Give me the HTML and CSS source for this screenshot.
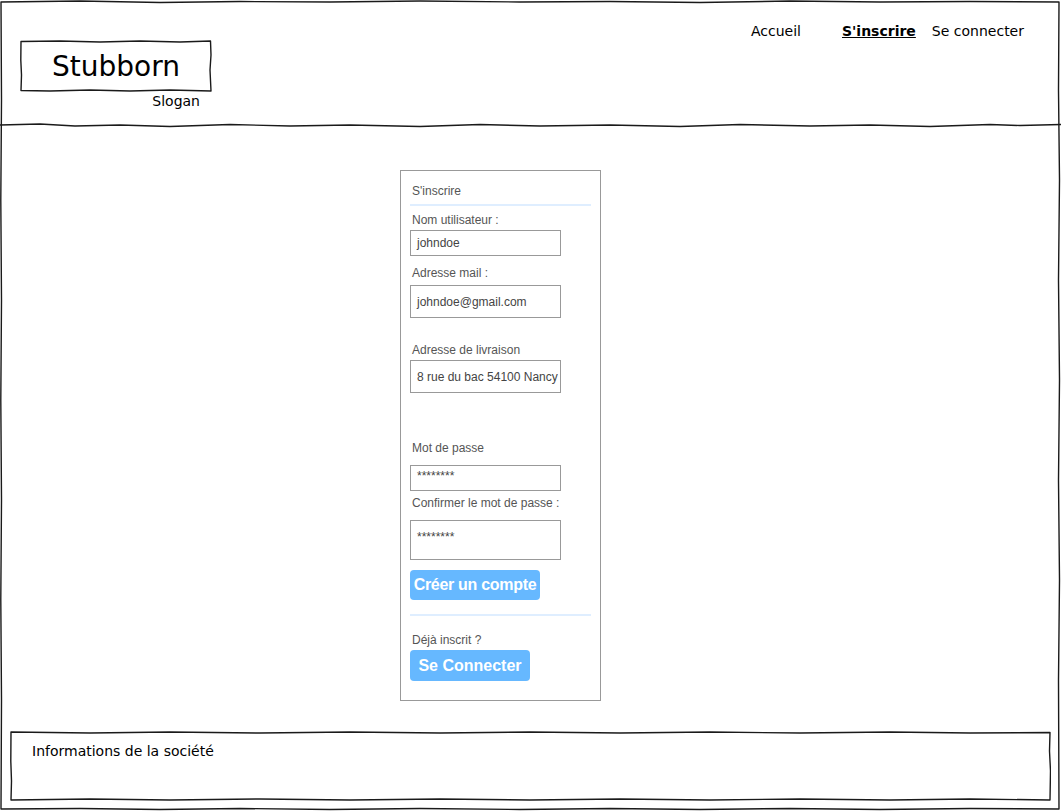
FILE: index.html
```html
<!DOCTYPE html>
<html lang="fr">
<head>
<meta charset="utf-8">
<title>Stubborn - S'inscrire</title>
<link rel="stylesheet" href="styles.css">
</head>
<body>
<div class="page">
  <svg class="sketch" width="1061" height="811" viewBox="0 0 1061 811" aria-hidden="true">
    <path d="M1 2 L80 1 L160 2.5 L240 1.5 L330 2 L420 1 L520 2 L610 1.5 L700 2.5 L790 1 L880 2 L970 1.5 L1059 2 L1058.5 90 L1059.5 180 L1058.5 280 L1059.5 380 L1058.5 480 L1059.5 580 L1058.5 680 L1059 809 L970 808.5 L880 809.5 L790 808.5 L700 809.5 L610 808.5 L520 809.5 L420 808.5 L330 809.5 L240 808.5 L160 809.5 L80 808.5 L1 809 L1.5 700 L0.8 600 L1.5 500 L0.8 400 L1.5 300 L0.8 200 L1.5 100 Z"/>
    <path d="M0 125 L40 124 L75 126 L120 125 L170 126.5 L230 124.5 L290 126 L350 125 L420 126.5 L480 124.5 L540 126 L610 125 L680 126.5 L740 124.5 L810 126 L870 125 L930 126.5 L990 124.5 L1020 125.5 L1061 124.5"/>
  </svg>

  <header class="header">
    <div class="brand">
      <div class="logo">
        <svg class="sketch" width="192" height="52" viewBox="0 0 192 52" aria-hidden="true">
          <path d="M1 1.5 L40 1 L80 2 L120 1 L160 2 L190.5 1 L191 15 L190 30 L191 51 L150 50 L110 51 L70 50 L30 51 L1 50.5 L1.5 35 L0.8 20 Z"/>
        </svg>
        <span class="logo-text">Stubborn</span>
      </div>
      <div class="slogan">Slogan</div>
    </div>
    <nav class="nav">
      <a class="nav-link nav-accueil" href="#">Accueil</a>
      <a class="nav-link nav-active" href="#">S'inscrire</a>
      <a class="nav-link" href="#">Se connecter</a>
    </nav>
  </header>

  <main class="main">
    <form class="card">
      <div class="card-title">S'inscrire</div>
      <div class="divider d1"></div>
      <label class="lbl l1">Nom utilisateur :</label>
      <div class="field f-sm m4">johndoe</div>
      <label class="lbl l2">Adresse mail :</label>
      <div class="field f-md m6">johndoe@gmail.com</div>
      <label class="lbl l3">Adresse de livraison</label>
      <div class="field f-md m4">8 rue du bac 54100 Nancy</div>
      <label class="lbl l4">Mot de passe</label>
      <div class="field f-sm pw m11">********</div>
      <label class="lbl l5">Confirmer le mot de passe :</label>
      <div class="field f-lg pw m11">********</div>
      <button type="button" class="btn btn-create">Créer un compte</button>
      <div class="divider d2"></div>
      <div class="lbl l6">Déjà inscrit ?</div>
      <button type="button" class="btn btn-login">Se Connecter</button>
    </form>
  </main>

  <footer class="footer">
    <svg class="sketch" width="1041" height="70" viewBox="0 0 1041 70" aria-hidden="true">
      <path d="M1 1 L80 2 L160 1 L250 2 L340 1 L430 2 L520 1 L610 2 L700 1 L790 2 L880 1 L960 2 L1040 1.5 L1039.5 20 L1040.5 40 L1040 69 L960 68 L880 69 L790 68 L700 69 L610 68 L520 69 L430 68 L340 69 L250 68 L160 69 L80 68 L1 69 L1.5 50 L0.8 30 Z"/>
    </svg>
    <span class="footer-text">Informations de la société</span>
  </footer>
</div>
</body>
</html>
```
FILE: styles.css
```css
* { box-sizing: border-box; }
html, body { margin: 0; padding: 0; background: #fff; }

.page {
  position: relative;
  width: 1061px;
  height: 811px;
  display: flex;
  flex-direction: column;
  font-family: "DejaVu Sans", Verdana, sans-serif;
  color: #000;
  overflow: hidden;
}

.sketch {
  position: absolute;
  left: 0;
  top: 0;
  pointer-events: none;
}
.sketch path {
  fill: none;
  stroke: #1a1a1a;
  stroke-width: 1.4;
  stroke-linejoin: round;
}

/* Header */
.header {
  height: 126px;
  flex: 0 0 126px;
  display: flex;
  justify-content: space-between;
  align-items: flex-start;
  padding-left: 20px;
  padding-right: 37px;
}
.brand {
  padding-top: 40px;
  display: flex;
  flex-direction: column;
  align-items: flex-end;
}
.logo {
  position: relative;
  width: 192px;
  height: 52px;
  display: flex;
  align-items: center;
  justify-content: center;
}
.logo-text {
  font-size: 28px;
  line-height: 34px;
  margin-top: 2px;
}
.slogan {
  font-size: 14px;
  line-height: 17px;
  margin-top: 1px;
  margin-right: 12px;
}
.nav {
  display: flex;
  padding-top: 23px;
}
.nav-link {
  font-size: 14px;
  line-height: 17px;
  color: #000;
  text-decoration: none;
}
.nav-accueil { margin-right: 41px; }
.nav-active {
  font-weight: bold;
  text-decoration: underline;
  margin-right: 16px;
}

/* Main */
.main {
  flex: 1;
  padding-top: 44px;
  padding-left: 400px;
}
.card {
  width: 201px;
  height: 531px;
  border: 1px solid #999;
  padding: 0 0 0 9px;
  margin: 0;
  font-family: "Liberation Sans", Arial, sans-serif;
  font-size: 12px;
  color: #555;
}
.card-title {
  margin-top: 13px;
  margin-left: 2px;
  line-height: 14px;
}
.divider {
  width: 181px;
  height: 2px;
  background: #dfeeff;
}
.d1 { margin-top: 6px; }
.d2 { margin-top: 14px; }

.lbl {
  display: block;
  line-height: 14px;
  margin-left: 2px;
}
.l1 { margin-top: 7px; }
.l2 { margin-top: 10px; }
.l3 { margin-top: 25px; }
.l4 { margin-top: 48px; }
.l5 { margin-top: 5px; }
.l6 { margin-top: 17px; }

.field {
  width: 151px;
  border: 1px solid #999;
  color: #444;
  padding-left: 6px;
  white-space: nowrap;
  overflow: hidden;
  display: flex;
  align-items: center;
  font-size: 12px;
}
.f-sm { height: 26px; }
.f-md { height: 33px; }
.f-lg { height: 40px; align-items: flex-start; padding-top: 9px; }
.pw { font-size: 12px; line-height: 14px; }
.f-sm.pw { padding-bottom: 4px; }
.m4 { margin-top: 3px; }
.m6 { margin-top: 5px; }
.m11 { margin-top: 10px; }

.btn {
  display: block;
  border: none;
  background: #66b8ff;
  color: #fff;
  font-family: "Liberation Sans", Arial, sans-serif;
  font-weight: bold;
  font-size: 16px;
  border-radius: 4px;
  padding: 0;
  text-align: center;
  letter-spacing: -0.3px;
}
.btn-create {
  margin-top: 10px;
  width: 130px;
  height: 30px;
}
.btn-login {
  margin-top: 3px;
  width: 120px;
  height: 31px;
  letter-spacing: 0;
}

/* Footer */
.footer {
  position: relative;
  width: 1041px;
  height: 70px;
  margin: 0 0 10px 10px;
  padding: 10px 0 0 22px;
  flex: 0 0 70px;
}
.footer-text {
  font-size: 14px;
  line-height: 17px;
}
```
